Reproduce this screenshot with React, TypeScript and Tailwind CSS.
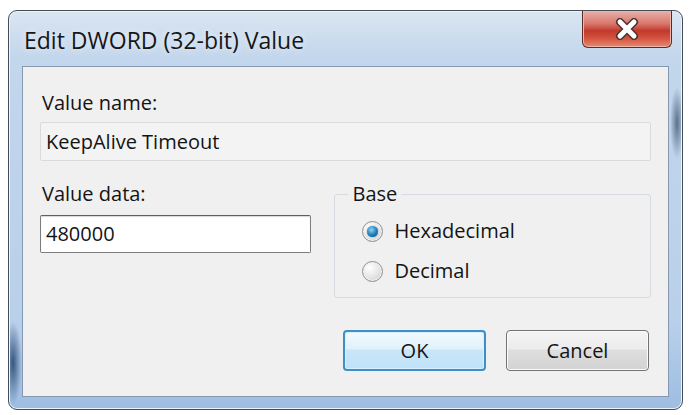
import React from "react";

function Radio({ checked }: { checked?: boolean }) {
  return (
    <span className="flex h-[21px] w-[21px] items-center justify-center rounded-full border border-[#8a8f96] bg-[radial-gradient(circle_at_35%_30%,#ffffff,#e4e4e4_55%,#c9c9c9)] shadow-[inset_0_0_0_1px_#f4f4f4]">
      {checked && (
        <span className="h-[11px] w-[11px] rounded-full bg-[radial-gradient(circle_at_40%_35%,#8fd3f5,#1d7ab8_55%,#0f4d7d)] shadow-[0_0_1px_#0c3a5e]" />
      )}
    </span>
  );
}

export default function App() {
  return (
    <div className="h-[415px] w-[690px] bg-white pl-2 pt-[10px] font-['Open_Sans','Liberation_Sans',sans-serif] text-[#141414]">
      {/* window frame (aero glass) */}
      <div className="flex h-[400px] w-[675px] flex-col rounded-[9px] border border-[#444c57] bg-[radial-gradient(9px_42px_at_4px_352px,#35567f,transparent),radial-gradient(7px_36px_at_668px_112px,#5a7089,transparent),linear-gradient(to_bottom,#dae5f1,#c2d6ec_12%,#b9d0ea_78%,#9dbde2)] shadow-[inset_0_0_0_1px_#eef4fa]">
        {/* title bar */}
        <div className="flex h-[55px] items-start justify-between">
          <span className="mt-[15px] ml-[15px] text-[23px] leading-[28px] text-[#161616] [text-shadow:0_0_6px_#eef4fb]">
            Edit DWORD (32-bit) Value
          </span>
          <button className="mr-[10px] flex h-[37px] w-[90px] items-center justify-center rounded-b-[6px] border border-t-0 border-[#5a2b27] bg-[linear-gradient(to_bottom,#e6b0a8,#d9786c_35%,#c2392c_55%,#d2523f_75%,#e98a70)] shadow-[inset_0_0_0_1px_#f0b4a8]">
            <svg width="28" height="22" viewBox="0 0 28 22">
              <path d="M7 4 L21 18 M21 4 L7 18" stroke="#4a3330" strokeWidth="8" strokeLinecap="round" />
              <path d="M7 4 L21 18 M21 4 L7 18" stroke="#ffffff" strokeWidth="5" strokeLinecap="round" />
            </svg>
          </button>
        </div>

        {/* client area */}
        <div className="mx-[13px] mb-[12px] flex flex-1 flex-col border border-[#8799b0] bg-[#f0f0f0] px-[17px] pt-[24px] text-[20px] leading-[24px]">
          <span className="ml-[2px]">Value name:</span>
          <div className="mt-[7px] flex h-[39px] items-center rounded-[2px] border border-[#dadada] bg-[#f3f3f3] pl-[5px]">
            KeepAlive Timeout
          </div>

          <div className="mt-[21px] flex gap-[23px]">
            <div className="flex w-[272px] flex-col">
              <span className="ml-[2px]">Value data:</span>
              <div className="mt-[9px] flex h-[38px] items-center rounded-[2px] border border-[#7d7d7d] border-t-[#5f5f5f] bg-white pl-[5px] shadow-[inset_0_1px_1px_#d8d8d8]">
                480000
              </div>
            </div>

            <fieldset className="h-[116px] w-[317px] rounded-[3px] border border-[#d5dbe0] px-[27px]">
              <legend className="-ml-[14px] px-[4px]">Base</legend>
              <label className="mt-[13px] flex items-center gap-[11px]">
                <Radio checked />
                <span>Hexadecimal</span>
              </label>
              <label className="mt-[16px] flex items-center gap-[11px]">
                <Radio />
                <span>Decimal</span>
              </label>
            </fieldset>
          </div>

          <div className="mt-[32px] flex justify-end gap-[20px] pr-[2px]">
            <button className="h-[41px] w-[143px] rounded-[4px] border-2 border-[#3d8fc6] bg-[linear-gradient(to_bottom,#f1f9fe,#e1f1fb_45%,#c9e6f8_50%,#bfe2f8)] shadow-[inset_0_0_0_1px_#d6f0ff]">
              OK
            </button>
            <button className="h-[41px] w-[143px] rounded-[4px] border border-[#737373] bg-[linear-gradient(to_bottom,#f4f4f4,#ececec_45%,#dedede_50%,#d2d2d2)] shadow-[inset_0_0_0_1px_#fbfbfb]">
              Cancel
            </button>
          </div>
        </div>
      </div>
    </div>
  );
}
